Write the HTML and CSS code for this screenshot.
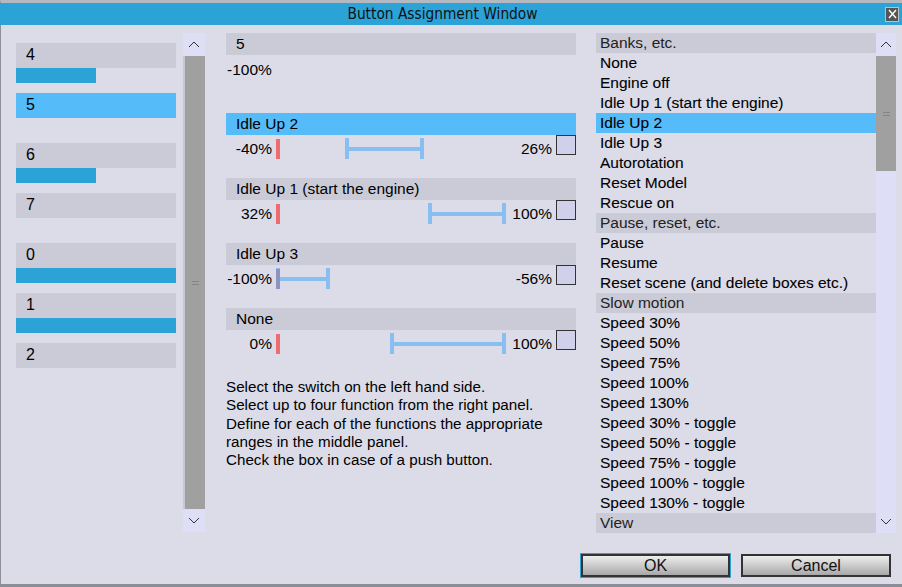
FILE: index.html
```html
<!DOCTYPE html>
<html>
<head>
  <meta charset="utf-8">
  <title>Button Assignment Window</title>
  <link rel="stylesheet" href="styles.css">
</head>
<body>
<div class="window">
  <div class="titlebar">
    <span class="title">Button Assignment Window</span>
    <span class="close">
      <svg width="9" height="10" viewBox="0 0 9 10"><path d="M1 1 L8 9 M8 1 L1 9" stroke="#fff" stroke-width="1.4" fill="none"/></svg>
    </span>
  </div>

  <div class="content">
    <!-- switches on the left -->
    <div class="switches">
      <div class="slot"><div class="slot-label">4</div><div class="slot-bar" style="width:80px"></div></div>
      <div class="slot"><div class="slot-label sel">5</div></div>
      <div class="slot"><div class="slot-label">6</div><div class="slot-bar" style="width:80px"></div></div>
      <div class="slot"><div class="slot-label">7</div></div>
      <div class="slot"><div class="slot-label">0</div><div class="slot-bar" style="width:160px"></div></div>
      <div class="slot"><div class="slot-label">1</div><div class="slot-bar" style="width:160px"></div></div>
      <div class="slot"><div class="slot-label">2</div></div>
    </div>
    <div class="vscroll left-scroll">
      <div class="arrow"><svg width="12" height="7" viewBox="0 0 12 7"><path d="M1 6 L6 1 L11 6" stroke="#333" fill="none"/></svg></div>
      <div class="thumb long"><span class="grip"></span></div>
      <div class="arrow"><svg width="12" height="7" viewBox="0 0 12 7"><path d="M1 1 L6 6 L11 1" stroke="#333" fill="none"/></svg></div>
    </div>

    <!-- ranges in the middle -->
    <div class="middle">
      <div class="head">5</div>
      <div class="current">-100%</div>

      <div class="group">
        <div class="head active">Idle Up 2</div>
        <div class="row">
          <span class="lo">-40%</span>
          <div class="track"><span class="marker"></span><span class="range" style="left:69px;width:79px"></span></div>
          <span class="hi">26%</span>
          <span class="check"></span>
        </div>
      </div>

      <div class="group">
        <div class="head">Idle Up 1 (start the engine)</div>
        <div class="row">
          <span class="lo">32%</span>
          <div class="track"><span class="marker"></span><span class="range" style="left:152px;width:78px"></span></div>
          <span class="hi">100%</span>
          <span class="check"></span>
        </div>
      </div>

      <div class="group">
        <div class="head">Idle Up 3</div>
        <div class="row">
          <span class="lo">-100%</span>
          <div class="track"><span class="marker"></span><span class="range" style="left:0px;width:54px"></span></div>
          <span class="hi">-56%</span>
          <span class="check"></span>
        </div>
      </div>

      <div class="group">
        <div class="head">None</div>
        <div class="row">
          <span class="lo">0%</span>
          <div class="track"><span class="marker"></span><span class="range" style="left:114px;width:116px"></span></div>
          <span class="hi">100%</span>
          <span class="check"></span>
        </div>
      </div>

      <p class="help">
        Select the switch on the left hand side.<br>
        Select up to four function from the right panel.<br>
        Define for each of the functions the appropriate<br>
        ranges in the middle panel.<br>
        Check the box in case of a push button.
      </p>
    </div>

    <!-- function list on the right -->
    <ul class="functions">
      <li class="cat">Banks, etc.</li>
      <li>None</li>
      <li>Engine off</li>
      <li>Idle Up 1 (start the engine)</li>
      <li class="sel">Idle Up 2</li>
      <li>Idle Up 3</li>
      <li>Autorotation</li>
      <li>Reset Model</li>
      <li>Rescue on</li>
      <li class="cat">Pause, reset, etc.</li>
      <li>Pause</li>
      <li>Resume</li>
      <li>Reset scene (and delete boxes etc.)</li>
      <li class="cat">Slow motion</li>
      <li>Speed 30%</li>
      <li>Speed 50%</li>
      <li>Speed 75%</li>
      <li>Speed 100%</li>
      <li>Speed 130%</li>
      <li>Speed 30% - toggle</li>
      <li>Speed 50% - toggle</li>
      <li>Speed 75% - toggle</li>
      <li>Speed 100% - toggle</li>
      <li>Speed 130% - toggle</li>
      <li class="cat">View</li>
    </ul>
    <div class="vscroll right-scroll">
      <div class="arrow"><svg width="12" height="7" viewBox="0 0 12 7"><path d="M1 6 L6 1 L11 6" stroke="#333" fill="none"/></svg></div>
      <div class="thumb short"><span class="grip"></span></div>
      <div class="track-rest"></div>
      <div class="arrow"><svg width="12" height="7" viewBox="0 0 12 7"><path d="M1 1 L6 6 L11 1" stroke="#333" fill="none"/></svg></div>
    </div>
  </div>

  <div class="footer">
    <button class="btn focus">OK</button>
    <button class="btn">Cancel</button>
  </div>
</div>
</body>
</html>
```

FILE: styles.css
```css
:root {
    --bg: #dcdce8 ;
    --head: #cbcbd7 ;
    --sel: #55bbf9 ;
    --blue: #2ba3d6 ;
    --lav: #dedef6 ;
    --thumb: #a0a0a0 ;
}
* {
    box-sizing: border-box ;
}
body {
    margin: 0 ;
    background: var(--bg) ;
    font-family: "Liberation Sans", Arial, sans-serif ;
    font-size: 15.5px ;
    color: #000 ;
}
.window {
    width: 902px ;
    height: 587px ;
    border-top: 3px solid #b4b8c0 ;
    border-bottom: 3px solid #8a8e96 ;
    border-left: 1px solid #8c9098 ;
    display: flex ;
    flex-direction: column ;
}
.titlebar {
    height: 22px ;
    background: var(--blue) ;
    display: flex ;
    align-items: center ;
    margin-left: -1px ;
}
.title {
    flex: 1 ;
    text-align: center ;
    font-family: "DejaVu Sans Condensed", "Liberation Sans", sans-serif ;
    font-size: 15.3px ;
    color: #111 ;
}
.close {
    width: 14px ;
    height: 15px ;
    margin-right: 3px ;
    background: #555 ;
    border: 1px solid #c0c0c0 ;
    display: flex ;
    align-items: center ;
    justify-content: center ;
}

.content {
    height: 515px ;
    display: flex ;
    align-items: flex-start ;
    padding: 8px 0 0 15px ;
}

/* left switches */
.switches {
    width: 160px ;
    padding-top: 10px ;
}
.slot {
    height: 50px ;
}
.slot-label {
    height: 25px ;
    line-height: 24px ;
    padding-left: 10px ;
    font-size: 16px ;
    background: var(--head) ;
}
.slot-label.sel {
    background: var(--sel) ;
}
.slot-bar {
    height: 15px ;
    background: var(--blue) ;
}

/* scrollbars */
.vscroll {
    display: flex ;
    flex-direction: column ;
}
.left-scroll {
    width: 22px ;
    height: 499px ;
    margin-left: 7px ;
}
.right-scroll {
    width: 20px ;
    height: 500px ;
    background: var(--lav) ;
}
.arrow {
    height: 23px ;
    background: var(--lav) ;
    display: flex ;
    align-items: center ;
    justify-content: center ;
}
.thumb {
    background: var(--thumb) ;
    display: flex ;
    align-items: center ;
    justify-content: center ;
}
.left-scroll .thumb {
    border-left: 2px solid #c8c8d2 ;
}
.thumb.long {
    flex: 1 ;
}
.thumb.short {
    height: 115px ;
}
.track-rest {
    flex: 1 ;
}
.grip {
    width: 7px ;
    height: 4px ;
    border-top: 1px solid #848484 ;
    border-bottom: 1px solid #848484 ;
}

/* middle panel */
.middle {
    width: 350px ;
    margin-left: 21px ;
}
.head {
    height: 22px ;
    line-height: 22px ;
    padding-left: 10px ;
    background: var(--head) ;
}
.head.active {
    background: var(--sel) ;
}
.current {
    height: 58px ;
    line-height: 30px ;
    padding-left: 1px ;
}
.group {
    height: 65px ;
}
.row {
    height: 25px ;
    display: flex ;
    line-height: 28px ;
}
.lo {
    width: 50px ;
    padding-right: 4px ;
    text-align: right ;
}
.hi {
    width: 50px ;
    padding-right: 4px ;
    text-align: right ;
}
.track {
    position: relative ;
    width: 230px ;
}
.marker {
    position: absolute ;
    left: 0 ;
    top: 4px ;
    width: 4px ;
    height: 20px ;
    background: #ef6b6f ;
}
.range {
    position: absolute ;
    top: 3px ;
    height: 21px ;
    opacity: 0.6 ;
}
.range::before {
    content: "" ;
    position: absolute ;
    left: 0 ;
    right: 0 ;
    top: 0 ;
    bottom: 0 ;
    border-left: 4px solid #50acf7 ;
    border-right: 4px solid #50acf7 ;
}
.range::after {
    content: "" ;
    position: absolute ;
    left: 4px ;
    right: 4px ;
    top: 9px ;
    height: 4px ;
    background: #50acf7 ;
}
.check {
    width: 20px ;
    height: 20px ;
    background: #d0d0ea ;
    border: 1px solid #333 ;
}
.help {
    margin: 0 ;
    padding-top: 5px ;
    font-size: 15.2px ;
    line-height: 18.3px ;
}

/* right list */
.functions {
    list-style: none ;
    margin: 0 0 0 20px ;
    padding: 0 ;
    width: 280px ;
}
.functions li {
    height: 20px ;
    line-height: 20px ;
    padding-left: 4px ;
    -webkit-text-stroke: 0.1px #000 ;
}
.functions li.cat {
    background: var(--head) ;
    color: #222 ;
    -webkit-text-stroke: 0 ;
}
.functions li.sel {
    background: var(--sel) ;
}

/* buttons */
.footer {
    flex: 1 ;
    display: flex ;
    justify-content: flex-end ;
    gap: 11px ;
    padding: 14px 11px 0 0 ;
}
.btn {
    height: 23px ;
    width: 150px ;
    font-family: "Liberation Sans", Arial, sans-serif ;
    font-size: 16px ;
    color: #111 ;
    border: 2px solid #333 ;
    background: linear-gradient(#eeeeee, #a8a8a8) ;
    padding: 0 ;
}
.btn.focus {
    width: 149px ;
    outline: 1px solid var(--blue) ;
}
```
